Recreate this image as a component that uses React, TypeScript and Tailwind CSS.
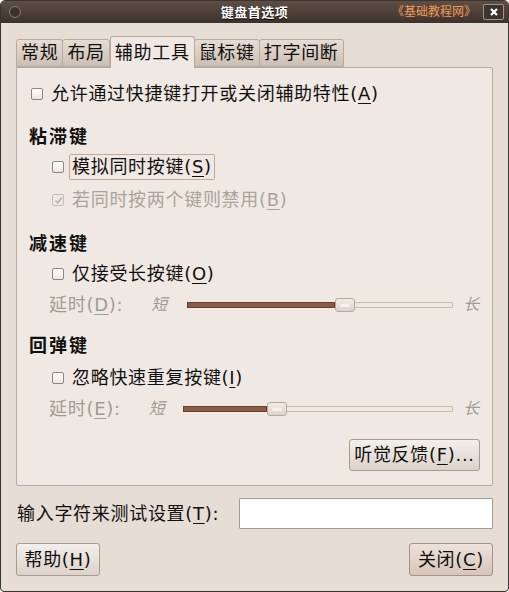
import React from 'react';

const font = { fontFamily: '"DejaVu Sans", "Noto Sans CJK SC", sans-serif' };

function Mn({ k }: { k: string }) {
  return (
    <>
      (<span className="underline underline-offset-[3px] decoration-1">{k}</span>)
    </>
  );
}

function Check({ checked, disabled }: { checked?: boolean; disabled?: boolean }) {
  return (
    <span
      className={`inline-flex w-[12px] h-[12px] shrink-0 items-center justify-center rounded-[2px] border ${
        disabled ? 'border-[#c4bbb2] bg-[#f0e9e3]' : 'border-[#8c8580] bg-gradient-to-b from-[#ffffff] to-[#ece6e0]'
      }`}
    >
      {checked && (
        <svg width="9" height="9" viewBox="0 0 9 9">
          <path d="M1.5 4.5 L3.8 7 L7.8 1.5" fill="none" stroke="#b2aaa2" strokeWidth="1.3" />
        </svg>
      )}
    </span>
  );
}

function Slider({ pct }: { pct: number }) {
  return (
    <div className="relative flex-1 h-[14px] flex items-center">
      <div className="w-full h-[6px] rounded-[1px] border border-[#c9beb3] bg-[#efe8e1]" />
      <div
        className="absolute left-0 h-[6px] border border-[#60402f] bg-[#8b5b44]"
        style={{ width: `${pct}%` }}
      />
      <div
        className="absolute top-0 w-[20px] h-[14px] rounded-[3px] border border-[#b5a99c] bg-gradient-to-b from-[#f1ebe5] to-[#ddd4cb] flex items-center justify-center"
        style={{ left: `${pct}%` }}
      >
        <div className="w-[10px] h-[3px] rounded-full bg-[#f6f2ee]" />
      </div>
    </div>
  );
}

function Tab({ label, active }: { label: string; active?: boolean }) {
  return active ? (
    <div className="relative z-10 h-[32px] -mb-[1px] px-[4px] flex items-center border border-b-0 border-[#b9aa9c] rounded-t-[3px] bg-[#f0e9e3] text-[#101010]">
      {label}
    </div>
  ) : (
    <div className="h-[28px] mt-[2px] px-[4px] flex items-center border border-[#b9aa9c] rounded-t-[3px] bg-gradient-to-b from-[#e6ddd4] to-[#cbbfb3] text-[#101010] -ml-[1px] first:ml-0">
      {label}
    </div>
  );
}

export default function App() {
  return (
    <div
      className="w-[509px] h-[592px] overflow-hidden bg-[#e6ddd5] border border-[#3a332e] rounded-t-[5px] rounded-b-[4px] flex flex-col text-[18px] tracking-[0.7px] leading-none text-[#101010]"
      style={font}
    >
      {/* title bar */}
      <div className="relative h-[22px] shrink-0 bg-gradient-to-b from-[#5e4f45] to-[#3d322b] flex items-center tracking-normal">
        <span className="ml-[8px] w-[12px] h-[12px] rounded-full border border-[#8c7f76] bg-[#3d322b]" />
        <span className="absolute left-0 right-0 text-center text-[13px] font-bold text-white tracking-[0.5px] [text-shadow:0_1px_1px_#000]">
          键盘首选项
        </span>
        <span className="ml-auto mr-[7px] text-[12px] text-[#f29a58]">《基础教程网》</span>
        <span className="mr-[4px] w-[21px] h-[16px] rounded-[2px] border border-[#a39488] bg-[#3e342e] flex items-center justify-center">
          <svg width="10" height="10" viewBox="0 0 10 10">
            <path d="M2 2 L8 8 M8 2 L2 8" stroke="#fff" strokeWidth="2.2" />
          </svg>
        </span>
      </div>

      <div className="flex-1 flex flex-col px-[15px] pt-[13px]">
        {/* tabs */}
        <div className="flex items-end h-[31px]">
          <Tab label="常规" />
          <Tab label="布局" />
          <Tab label="辅助工具" active />
          <Tab label="鼠标键" />
          <Tab label="打字间断" />
        </div>

        {/* panel */}
        <div className="h-[419px] border border-[#b9aa9c] rounded-b-[2px] rounded-tr-[2px] bg-[#f0e9e3] flex flex-col pt-[14px] pl-[12px] pr-[12px]">
          <div className="h-[24px] flex items-center gap-[8px] pl-[2px]">
            <Check />
            <span>允许通过快捷键打开或关闭辅助特性<Mn k="A" /></span>
          </div>

          <div className="h-[24px] mt-[19px] flex items-center font-bold tracking-[2px]">粘滞键</div>
          <div className="h-[26px] mt-[5px] flex items-center pl-[23px] gap-[5px]">
            <Check />
            <span className="h-[26px] px-[2px] flex items-center border border-[#c9a696] rounded-[2px]">
              模拟同时按键<Mn k="S" />
            </span>
          </div>
          <div className="h-[24px] mt-[8px] flex items-center pl-[23px] gap-[8px] text-[#aba39b]">
            <Check checked disabled />
            <span>若同时按两个键则禁用<Mn k="B" /></span>
          </div>

          <div className="h-[24px] mt-[20px] flex items-center font-bold tracking-[2px]">减速键</div>
          <div className="h-[24px] mt-[6px] flex items-center pl-[23px] gap-[8px]">
            <Check />
            <span>仅接受长按键<Mn k="O" /></span>
          </div>
          <div className="h-[24px] mt-[7px] flex items-center pl-[20px] text-[#a29b94]">
            <span>延时<Mn k="D" />:</span>
            <span className="ml-[28px] mr-[19px] italic text-[16px] text-[#a09a93]">短</span>
            <Slider pct={55.6} />
            <span className="ml-[10px] italic text-[16px] text-[#a09a93]">长</span>
          </div>

          <div className="h-[24px] mt-[17px] flex items-center font-bold tracking-[2px]">回弹键</div>
          <div className="h-[24px] mt-[8px] flex items-center pl-[23px] gap-[8px]">
            <Check />
            <span>忽略快速重复按键<Mn k="I" /></span>
          </div>
          <div className="h-[24px] mt-[7px] flex items-center pl-[20px] text-[#a29b94]">
            <span>延时<Mn k="E" />:</span>
            <span className="ml-[28px] mr-[18px] italic text-[16px] text-[#a09a93]">短</span>
            <Slider pct={30.8} />
            <span className="ml-[10px] italic text-[16px] text-[#a09a93]">长</span>
          </div>

          <div className="mt-[18px] flex justify-end">
            <button className="h-[32px] w-[131px] rounded-[3px] border border-[#a99b8e] bg-gradient-to-b from-[#f4efea] to-[#dcd3ca] text-[18px]">
              听觉反馈<Mn k="F" />...
            </button>
          </div>
        </div>

        {/* test row */}
        <div className="mt-[12px] h-[31px] flex items-center">
          <span className="ml-[1px]">输入字符来测试设置<Mn k="T" />:</span>
          <input className="ml-auto w-[254px] h-[31px] border border-[#a89c90] bg-white rounded-[1px] outline-none" />
        </div>

        {/* buttons */}
        <div className="mt-[14px] flex justify-between">
          <button className="h-[33px] w-[84px] rounded-[3px] border border-[#a99b8e] bg-gradient-to-b from-[#f4efea] to-[#dcd3ca] text-[18px]">
            帮助<Mn k="H" />
          </button>
          <button className="h-[33px] w-[84px] rounded-[3px] border border-[#a3918a] bg-gradient-to-b from-[#eee2da] to-[#d7c5ba] text-[18px]">
            关闭<Mn k="C" />
          </button>
        </div>
      </div>
    </div>
  );
}
